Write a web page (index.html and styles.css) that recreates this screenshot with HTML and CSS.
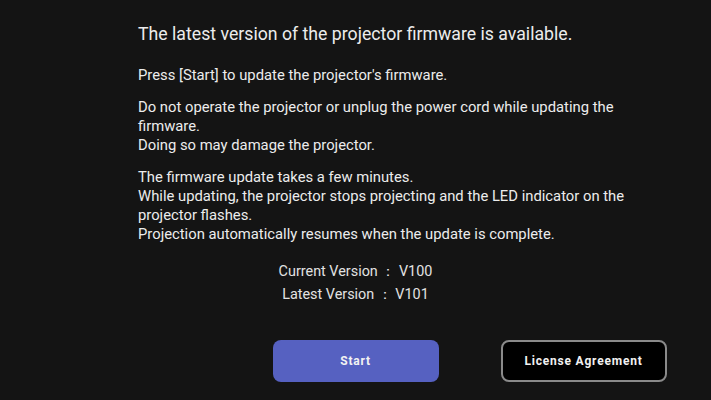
FILE: index.html
```html
<!DOCTYPE html>
<html lang="en">
<head>
    <meta charset="UTF-8">
    <meta name="viewport" content="width=device-width, initial-scale=1.0">
    <title>Firmware Update</title>
    <link rel="stylesheet" href="styles.css">
</head>
<body>
    <div class="screen">
        <h2 class="title">The latest version of the projector firmware is available.</h2>

        <div class="message">
            <p>Press [Start] to update the projector's firmware.</p>
            <p>Do not operate the projector or unplug the power cord while updating the firmware.<br>
            Doing so may damage the projector.</p>
            <p>The firmware update takes a few minutes.<br>
            While updating, the projector stops projecting and the LED indicator on the projector flashes.<br>
            Projection automatically resumes when the update is complete.</p>
        </div>

        <div class="versions">
            <div>Current Version ： V100</div>
            <div>Latest Version ： V101</div>
        </div>

        <div class="buttons">
            <span></span>
            <button class="btn btn-start">Start</button>
            <div class="right">
                <button class="btn btn-license">License Agreement</button>
            </div>
        </div>
    </div>
</body>
</html>
```

FILE: styles.css
```css
body {
    font-family: 'Roboto', 'Noto Sans', sans-serif;
    background-color: #141414;
    color: #ececec;
    margin: 0;
    height: 400px;
    overflow: hidden;
}
.screen {
    padding: 22px 0 0 138px;
}
.title {
    font-size: 17.7px;
    font-weight: normal;
    margin: 0 0 20px 0;
    line-height: 24px;
}
.message {
    width: 510px;
    font-size: 14.8px;
    line-height: 19px;
}
.message p {
    margin: 0 0 13px 0;
}
.versions {
    margin-left: -138px;
    margin-top: 16px;
    text-align: center;
    font-size: 14.4px;
    color: #e2e2e2;
}
.versions div {
    height: 23px;
    line-height: 23px;
}
.buttons {
    margin-left: -138px;
    margin-top: 34px;
    display: grid;
    grid-template-columns: 1fr 166px 1fr;
}
.right {
    padding-left: 62px;
}
.btn {
    width: 166px;
    height: 42px;
    border-radius: 8px;
    font-family: 'Roboto', sans-serif;
    font-size: 12px;
    font-weight: bold;
    letter-spacing: 0.8px;
    color: #f2f2f2;
    cursor: pointer;
}
.btn-start {
    background-color: #5661c1;
    border: none;
}
.btn-license {
    background-color: #000000;
    border: 2px solid #8a8a8a;
}
```
